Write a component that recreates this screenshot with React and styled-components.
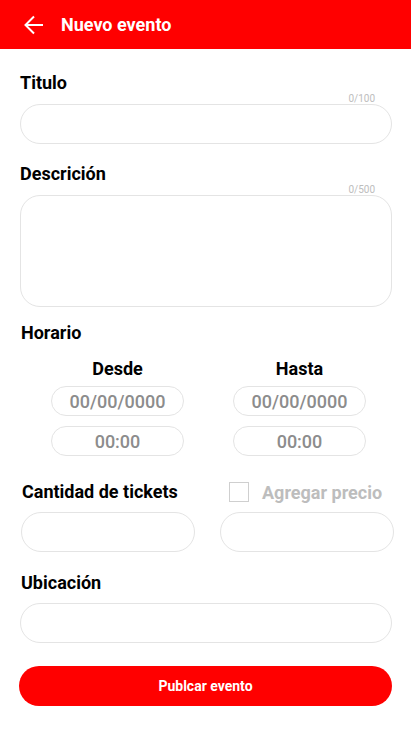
import React from 'react';
import styled, { createGlobalStyle } from 'styled-components';

const Global = createGlobalStyle`
  * { box-sizing: border-box; }
  body {
    margin: 0;
    background: #fff;
    font-family: Roboto, "Liberation Sans", Arial, sans-serif;
  }
`;

const Header = styled.header`
  height: 49px;
  background: #ff0000;
  display: flex;
  align-items: center;
  padding-left: 24px;
  gap: 17px;
  color: #fff;
`;

const Title = styled.h1`
  margin: 0;
  font-size: 18px;
  font-weight: 700;
`;

const Form = styled.div`
  padding: 23px 19px 0 20px;
`;

const Label = styled.div`
  font-size: 18px;
  font-weight: 700;
  line-height: 22px;
  color: #000;
  margin-top: ${p => p.$top || 0}px;
  padding-left: ${p => p.$indent || 0}px;
`;

const Counter = styled.div`
  font-size: 10px;
  line-height: 10px;
  color: #bdbdbd;
  text-align: right;
  padding-right: 17px;
`;

const Input = styled.div`
  height: ${p => p.$h || 40}px;
  width: ${p => (p.$w ? p.$w + 'px' : '100%')};
  border: 1px solid #e4e4e4;
  border-radius: 20px;
  margin-top: ${p => p.$top || 0}px;
`;

const Columns = styled.div`
  display: flex;
  gap: 49px;
  padding-left: 31px;
  margin-top: 14px;
`;

const Column = styled.div`
  width: 133px;
  display: flex;
  flex-direction: column;
  align-items: center;
`;

const SubLabel = styled.div`
  font-size: 18px;
  font-weight: 700;
  line-height: 22px;
`;

const Pill = styled.div`
  width: 133px;
  height: 30px;
  border: 1px solid #e4e4e4;
  border-radius: 15px;
  display: flex;
  align-items: center;
  justify-content: center;
  color: #8c8c8c;
  font-size: 18px;
  font-weight: 500;
  margin-top: ${p => p.$top}px;
`;

const TicketHead = styled.div`
  display: grid;
  grid-template-columns: 207px 1fr;
  align-items: center;
  margin-top: 25px;
  padding-left: 2px;
`;

const Check = styled.label`
  display: flex;
  align-items: center;
  gap: 13px;
  color: #bdbdbd;
  font-size: 18px;
  font-weight: 700;
`;

const Box = styled.span`
  width: 20px;
  height: 20px;
  border: 1px solid #cfcfcf;
`;

const TicketRow = styled.div`
  display: flex;
  gap: 25px;
  padding-left: 1px;
  margin-top: 9px;
  margin-right: -2px;
`;

const Button = styled.button`
  display: block;
  width: 373px;
  height: 40px;
  margin: 23px 0 0 -1px;
  border: 0;
  border-radius: 20px;
  background: #ff0000;
  color: #fff;
  font-family: inherit;
  font-size: 14px;
  font-weight: 700;
`;

const BackIcon = () => (
  <svg width="20" height="20" viewBox="0 0 20 20" fill="none" stroke="#fff" strokeWidth="2">
    <path d="M19 10H2M10 1.5L1.5 10 10 18.5" />
  </svg>
);

export default function App() {
  return (
    <>
      <Global />
      <Header>
        <BackIcon />
        <Title>Nuevo evento</Title>
      </Header>
      <Form>
        <Label>Titulo</Label>
        <Counter>0/100</Counter>
        <Input />

        <Label $top={19}>Descrición</Label>
        <Counter>0/500</Counter>
        <Input $h={112} />

        <Label $top={15} $indent={1}>Horario</Label>
        <Columns>
          <Column>
            <SubLabel>Desde</SubLabel>
            <Pill $top={6}>00/00/0000</Pill>
            <Pill $top={10}>00:00</Pill>
          </Column>
          <Column>
            <SubLabel>Hasta</SubLabel>
            <Pill $top={6}>00/00/0000</Pill>
            <Pill $top={10}>00:00</Pill>
          </Column>
        </Columns>

        <TicketHead>
          <Label>Cantidad de tickets</Label>
          <Check>
            <Box />
            Agregar precio
          </Check>
        </TicketHead>
        <TicketRow>
          <Input $w={174} />
          <Input $w={174} />
        </TicketRow>

        <Label $top={20} $indent={1}>Ubicación</Label>
        <Input $top={9} />

        <Button>Publcar evento</Button>
      </Form>
    </>
  );
}
